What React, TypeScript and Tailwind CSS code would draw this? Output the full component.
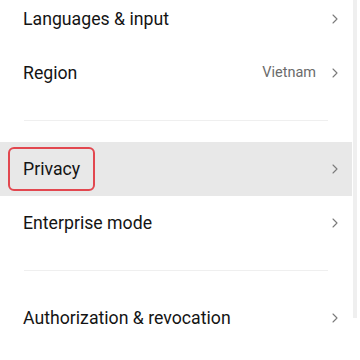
import { ChevronRight } from "lucide-react";

interface RowProps {
  label: string;
  value?: string;
  highlighted?: boolean;
}

function Row({ label, value, highlighted }: RowProps) {
  return (
    <div className={highlighted ? "h-[54px] bg-[#e8e8e8] flex items-center pl-[23px] pr-[9px]" : "h-[54px] flex items-center pl-[23px] pr-[9px]"}>
      {highlighted ? (
        <div className="-ml-[15px] h-[44px] px-[13px] flex items-center rounded-[6px] border-2 border-[#e2474f]">
          <span className="text-[17.7px] text-[#141414]">{label}</span>
        </div>
      ) : (
        <span className="text-[17.7px] text-[#141414]">{label}</span>
      )}
      <div className="ml-auto flex items-center gap-[11px]">
        {value && <span className="text-[14.5px] text-[#6b6b6b]">{value}</span>}
        <ChevronRight className="h-[16px] w-[16px] text-[#7a7a7a]" strokeWidth={1.6} />
      </div>
    </div>
  );
}

function Divider() {
  return <div className="mx-[24px] h-px bg-[#efefef]" />;
}

export default function App() {
  return (
    <div className="relative w-[360px] h-[360px] bg-white overflow-hidden font-['Roboto',sans-serif]">
      <div className="w-[352px] -mt-[8px]">
        <Row label="Languages & input" />
        <Row label="Region" value="Vietnam" />
        <div className="h-[20px]" />
        <Divider />
        <div className="h-[21px]" />
        <Row label="Privacy" highlighted />
        <Row label="Enterprise mode" />
        <div className="h-[20px]" />
        <Divider />
        <div className="h-[20px]" />
        <Row label="Authorization & revocation" />
      </div>
      <div className="absolute right-[3px] top-0 w-[4px] h-[318px] bg-[#efefef]" />
    </div>
  );
}
